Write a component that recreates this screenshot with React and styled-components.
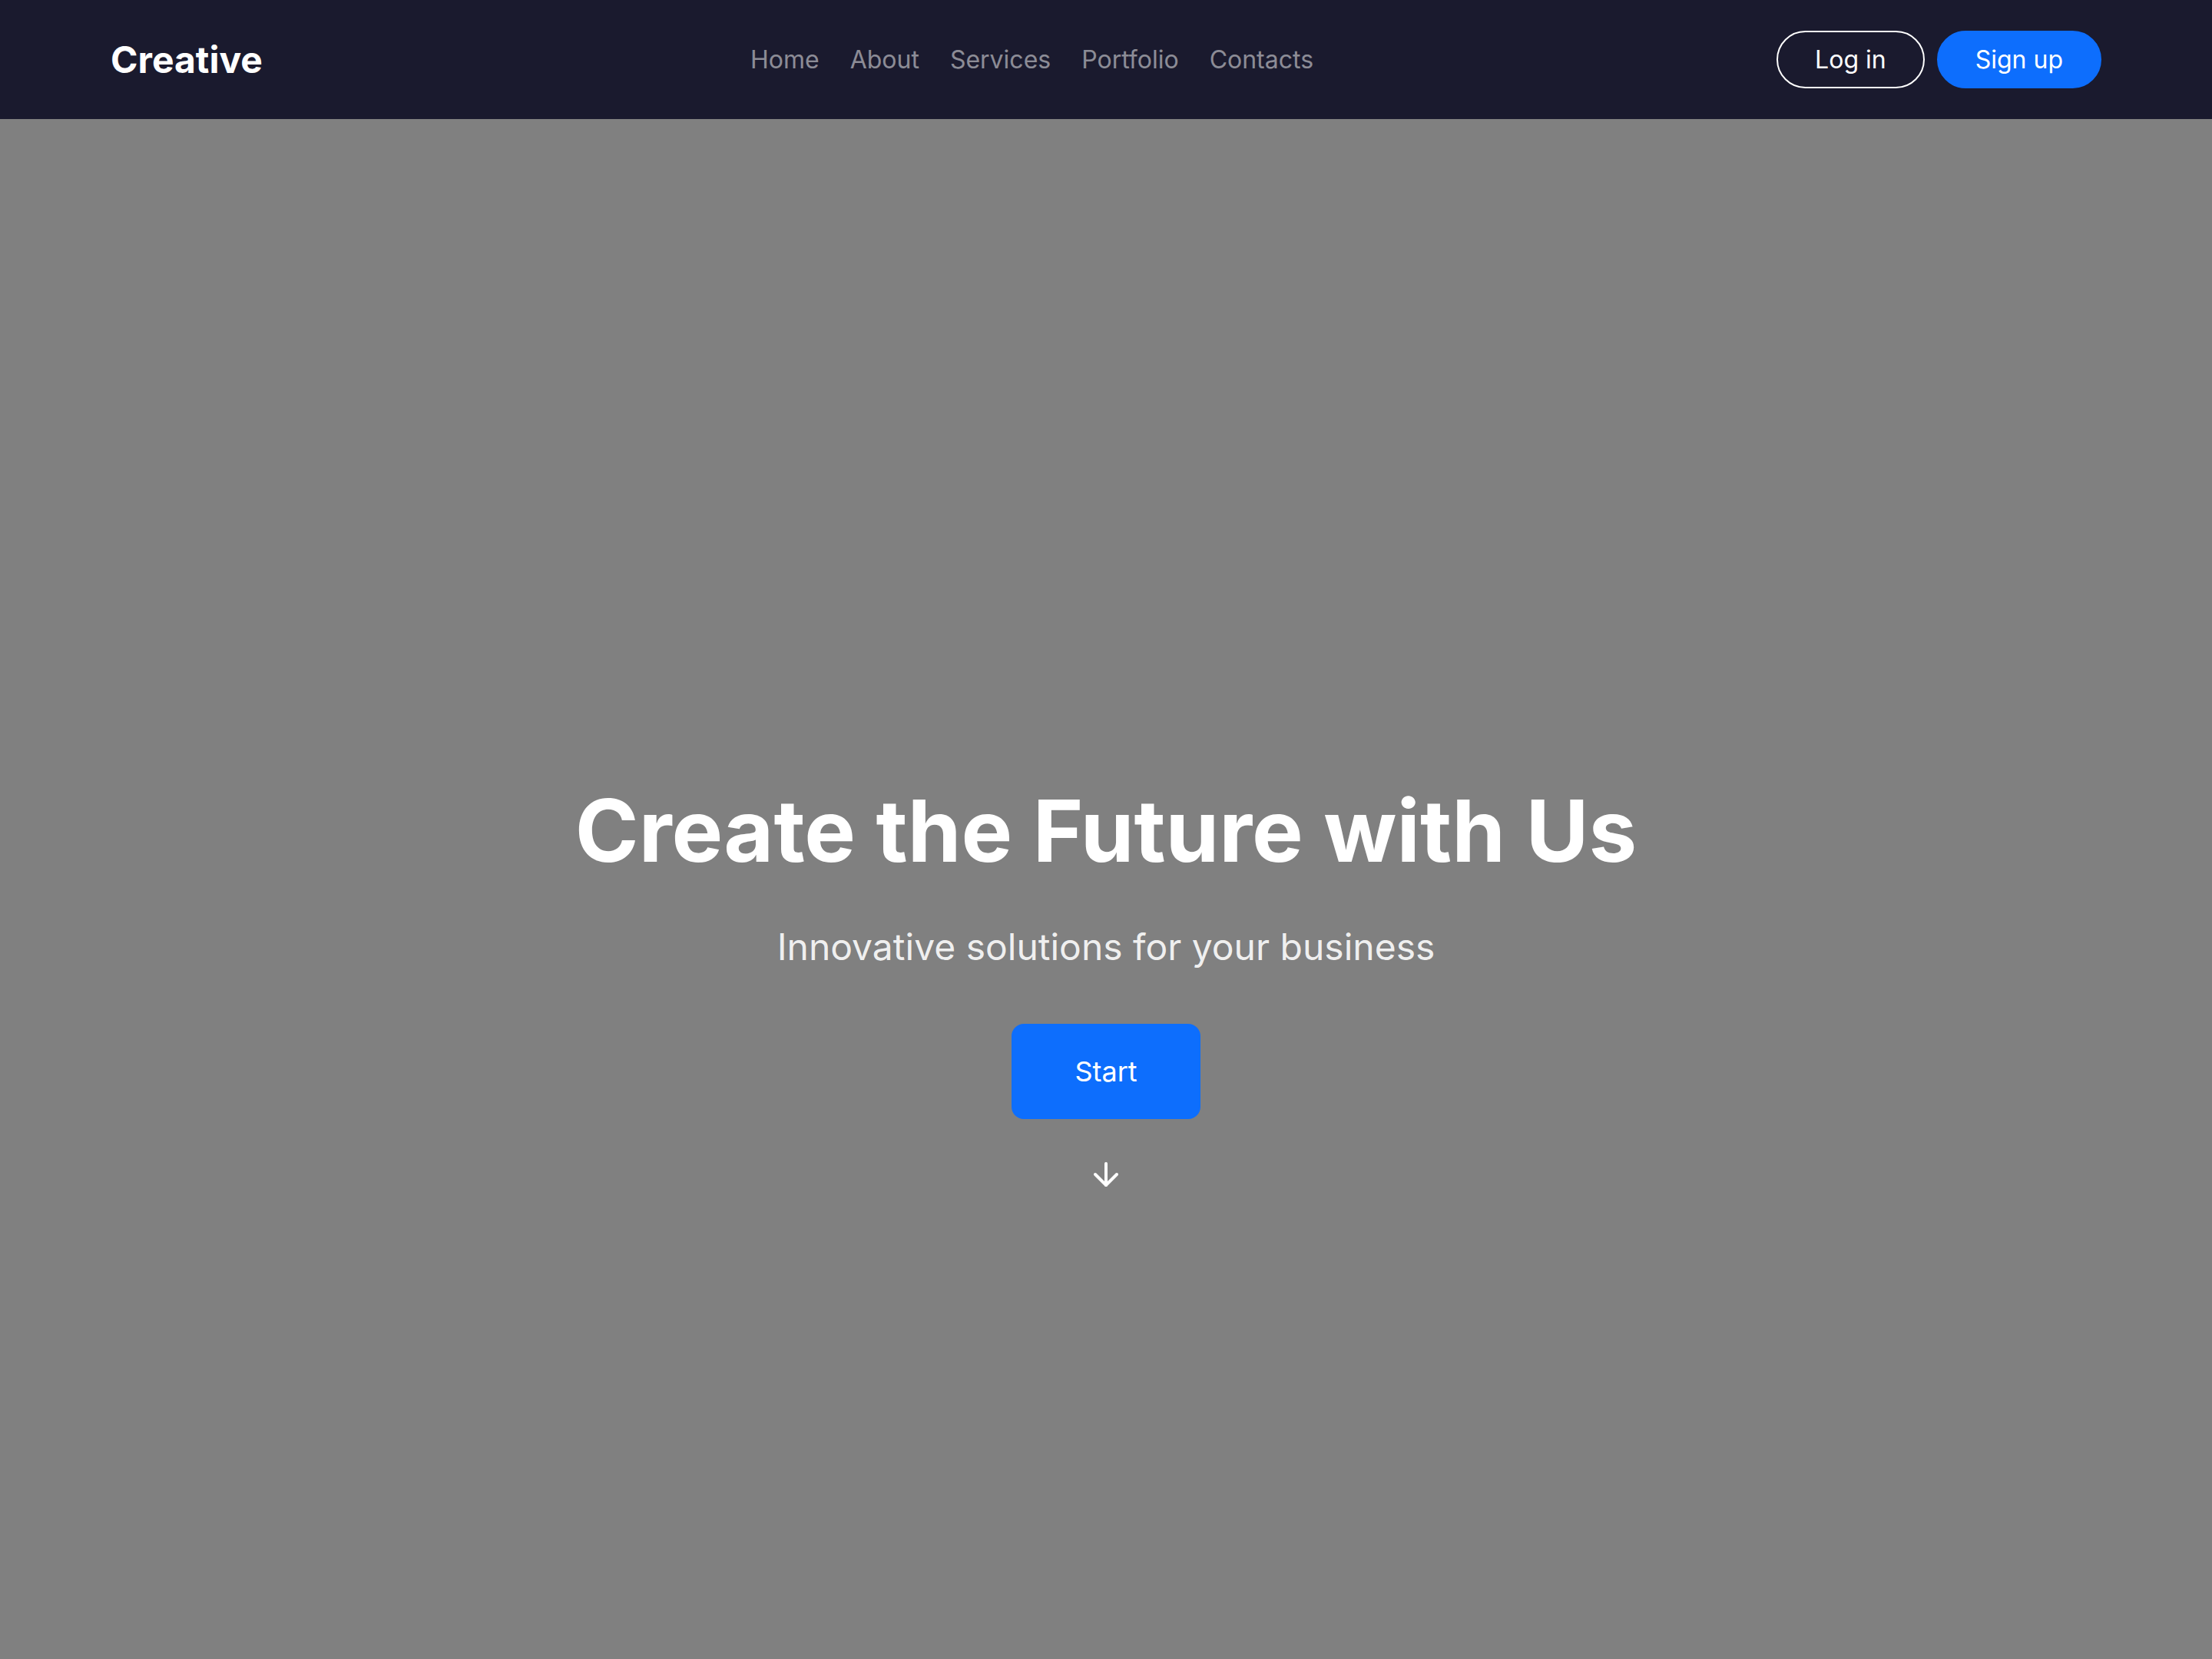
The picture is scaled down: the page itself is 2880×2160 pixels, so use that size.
import React from "react";
import styled, { createGlobalStyle } from "styled-components";
import { ArrowDown } from "lucide-react";

const GlobalStyle = createGlobalStyle`
  * {
    box-sizing: border-box;
  }
  body {
    margin: 0;
    font-family: "Inter", "Noto Sans", sans-serif;
    background: #808080;
    color: #fff;
  }
`;

const Page = styled.div`
  display: flex;
  flex-direction: column;
  height: 100vh;
`;

const Header = styled.header`
  display: flex;
  align-items: center;
  justify-content: space-between;
  padding: 40px 5%;
  background: #1a1a2e;
`;

const Logo = styled.a`
  font-size: 48px;
  font-weight: 700;
  color: #fff;
  text-decoration: none;
`;

const Nav = styled.nav`
  display: flex;
  gap: 40px;
  margin-left: 32px;
`;

const NavLink = styled.a`
  font-size: 32px;
  color: rgba(255, 255, 255, 0.5);
  text-decoration: none;
`;

const Actions = styled.div`
  display: flex;
  gap: 16px;
`;

const PillButton = styled.button`
  font-family: inherit;
  font-size: 32px;
  padding: 16px 48px;
  border-radius: 999px;
  color: #fff;
  cursor: pointer;
  border: 2px solid ${(props) => (props.primary ? "#0d6efd" : "#fff")};
  background: ${(props) => (props.primary ? "#0d6efd" : "transparent")};
`;

/* top padding equal to the header keeps the block at the same spot as a full-height hero */
const Hero = styled.section`
  flex: 1;
  display: flex;
  align-items: center;
  justify-content: center;
  padding-top: 156px;
  background: #808080;
`;

const HeroContent = styled.div`
  position: relative;
  display: flex;
  flex-direction: column;
  align-items: center;
  text-align: center;
`;

const Title = styled.h1`
  margin: 0 0 48px;
  font-size: 112px;
  font-weight: 700;
  line-height: 1.2;
`;

const Subtitle = styled.p`
  margin: 0 0 64px;
  font-size: 48px;
  line-height: 1.5;
  color: rgba(255, 255, 255, 0.9);
`;

const StartButton = styled.button`
  font-family: inherit;
  font-size: 36px;
  padding: 38px 80px;
  border: 2px solid #0d6efd;
  border-radius: 16px;
  background: #0d6efd;
  color: #fff;
  cursor: pointer;
`;

const ScrollHint = styled.div`
  position: absolute;
  top: calc(100% + 48px);
  left: 50%;
  transform: translateX(-50%);
  display: flex;
  color: #fff;
`;

const links = ["Home", "About", "Services", "Portfolio", "Contacts"];

const App = () => {
  return (
    <Page>
      <GlobalStyle />
      <Header>
        <Logo href="#">Creative</Logo>
        <Nav>
          {links.map((link) => (
            <NavLink key={link} href="#">
              {link}
            </NavLink>
          ))}
        </Nav>
        <Actions>
          <PillButton>Log in</PillButton>
          <PillButton primary>Sign up</PillButton>
        </Actions>
      </Header>
      <Hero>
        <HeroContent>
          <Title>Create the Future with Us</Title>
          <Subtitle>Innovative solutions for your business</Subtitle>
          <StartButton>Start</StartButton>
          <ScrollHint>
            <ArrowDown size={48} strokeWidth={2} />
          </ScrollHint>
        </HeroContent>
      </Hero>
    </Page>
  );
};

export default App;
